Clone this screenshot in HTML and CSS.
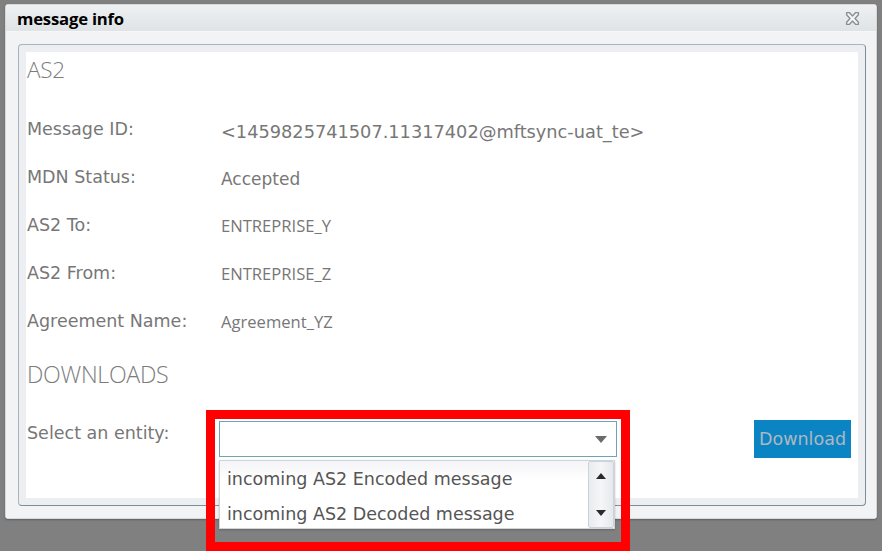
FILE: index.html
```html
<!DOCTYPE html>
<html>
<head>
<meta charset="utf-8">
<title>message info</title>
<link rel="stylesheet" href="styles.css">
</head>
<body>
<div class="dialog">
  <div class="titlebar">
    <span class="title">message info</span>
    <svg class="close" width="15" height="15" viewBox="0 0 14 14">
      <path d="M1.5 1.5 L4 1.5 L7 4.6 L10 1.5 L12.5 1.5 L12.5 3.5 L9.3 7 L12.5 10.5 L12.5 12.5 L10 12.5 L7 9.4 L4 12.5 L1.5 12.5 L1.5 10.5 L4.7 7 L1.5 3.5 Z" fill="#f4f5f6" stroke="#8a8f94" stroke-width="1.3" stroke-linejoin="round"/>
    </svg>
  </div>
  <div class="dialog-body">
    <div class="panel">
      <div class="content">
        <h2 class="section">AS2</h2>
        <div class="rows">
          <div class="row"><span class="label">Message ID:</span><span class="value value-id">&lt;1459825741507.11317402@mftsync-uat_te&gt;</span></div>
          <div class="row"><span class="label">MDN Status:</span><span class="value value-status">Accepted</span></div>
          <div class="row"><span class="label">AS2 To:</span><span class="value value-small">ENTREPRISE_Y</span></div>
          <div class="row"><span class="label">AS2 From:</span><span class="value value-small">ENTREPRISE_Z</span></div>
          <div class="row"><span class="label">Agreement Name:</span><span class="value value-small">Agreement_YZ</span></div>
        </div>
        <h2 class="section section-dl">DOWNLOADS</h2>
        <div class="select-row">
          <span class="label">Select an entity:</span>
          <div class="select-wrap">
            <div class="select">
              <svg class="caret" width="12" height="7" viewBox="0 0 12 7"><path d="M0 0 H12 L6 7 Z" fill="#6b6b6b"/></svg>
            </div>
            <div class="dropdown">
              <ul class="options">
                <li>incoming AS2 Encoded message</li>
                <li>incoming AS2 Decoded message</li>
              </ul>
              <div class="scrollbar">
                <svg width="10" height="6" viewBox="0 0 10 6"><path d="M0 6 H10 L5 0 Z" fill="#2b2b2b"/></svg>
                <svg width="10" height="6" viewBox="0 0 10 6"><path d="M0 0 H10 L5 6 Z" fill="#2b2b2b"/></svg>
              </div>
            </div>
          </div>
          <button class="download">Download</button>
        </div>
      </div>
    </div>
  </div>
</div>
<div class="highlight"></div>
</body>
</html>
```

FILE: styles.css
```css
html, body {
  margin: 0;
  padding: 0;
}
body {
  background: #808080;
  width: 882px;
  height: 551px;
  overflow: hidden;
  position: relative;
  font-family: "DejaVu Sans", Verdana, sans-serif;
}
.dialog {
  margin: 4px 0 0 5px;
  width: 872px;
  height: 515px;
  box-sizing: border-box;
  background: #eef0f2;
  border: 1px solid #d5d9dd;
  border-radius: 3px;
  box-shadow: 0 1px 2px rgba(0,0,0,0.25);
  display: flex;
  flex-direction: column;
}
.titlebar {
  height: 26px;
  flex: none;
  background: linear-gradient(#eef0f2, #e0e3e6);
  display: flex;
  align-items: center;
  justify-content: space-between;
  padding: 0 16px 0 11px;
  border-bottom: 1px solid #f4f6f8;
}
.title {
  font-family: "Open Sans", "Noto Sans", sans-serif;
  font-weight: 700;
  font-size: 16.7px;
  color: #000;
  letter-spacing: -0.2px;
}
.close {
  display: block;
}
.dialog-body {
  flex: 1;
  padding: 12px 10px 12px 12px;
  background: #f1f3f5;
  display: flex;
}
.panel {
  flex: 1;
  border: 1px solid #a9b4bf;
  border-right-color: #7d8d9c;
  border-bottom-color: #7d8d9c;
  border-radius: 4px;
  padding: 7px;
  background: #eceef1;
  display: flex;
}
.content {
  flex: 1;
  background: #fff;
  padding-left: 1px;
  position: relative;
}
.section {
  margin: 0;
  font-family: "Open Sans", "Noto Sans", sans-serif;
  font-weight: 300;
  font-size: 22.5px;
  line-height: 36px;
  color: #7c7c7c;
  letter-spacing: -0.3px;
}
.section-dl {
  margin-top: 11px;
  font-size: 23.2px;
}
.rows {
  margin-top: 17px;
}
.row {
  height: 48px;
  display: flex;
  align-items: center;
}
.label {
  width: 194px;
  flex: none;
  font-size: 17.5px;
  color: #777;
}
.value {
  color: #777;
  font-size: 17px;
}
.value-id {
  font-size: 17.75px;
  position: relative;
  top: 3px;
}
.value-status {
  position: relative;
  top: 2px;
}
.value-small {
  font-family: "Open Sans", "Noto Sans", sans-serif;
  font-size: 16.6px;
  color: #777;
}
.select-row {
  margin-top: 29px;
  display: flex;
  align-items: flex-start;
}
.select-row .label {
  width: 192px;
  line-height: 24px;
}
.select-wrap {
  position: relative;
  width: 398px;
}
.select {
  height: 36px;
  box-sizing: border-box;
  border: 1px solid #6fa3b9;
  background: #fff;
  display: flex;
  align-items: center;
  justify-content: flex-end;
  padding-right: 9px;
}
.caret {
  display: block;
  margin-top: 1px;
}
.dropdown {
  position: absolute;
  top: 39px;
  left: 0;
  width: 396px;
  height: 69px;
  box-sizing: border-box;
  background: #fff;
  border: 1px solid #cfd4d9;
  box-shadow: 0 1px 2px rgba(0,0,0,0.2);
  display: flex;
  z-index: 2;
}
.options {
  list-style: none;
  margin: 0;
  padding: 0;
  flex: 1;
  background: linear-gradient(#f4f5f7, #ffffff 30%);
}
.options li {
  height: 35px;
  line-height: 36px;
  padding-left: 7px;
  font-size: 17.5px;
  color: #555;
  white-space: nowrap;
}
.options li + li {
  height: 32px;
  line-height: 37px;
}
.scrollbar {
  width: 26px;
  box-sizing: border-box;
  border: 1px solid #ccd2d8;
  border-radius: 2px;
  background: linear-gradient(90deg, #e9ecef, #f4f6f8 50%, #e6e9ec);
  display: flex;
  flex-direction: column;
  align-items: center;
  justify-content: space-between;
  padding: 11px 0 11px;
}
.scrollbar svg {
  display: block;
}
.download {
  margin-left: auto;
  margin-right: 7px;
  margin-top: -1px;
  width: 97px;
  height: 38px;
  border: none;
  background: #0b84c4;
  color: #aeb7c0;
  font-family: "DejaVu Sans", Verdana, sans-serif;
  font-size: 17.5px;
  padding: 0;
}
.highlight {
  position: absolute;
  left: 206px;
  top: 410px;
  width: 424px;
  height: 141px;
  box-sizing: border-box;
  border: 9px solid #ff0000;
  z-index: 5;
}
```
